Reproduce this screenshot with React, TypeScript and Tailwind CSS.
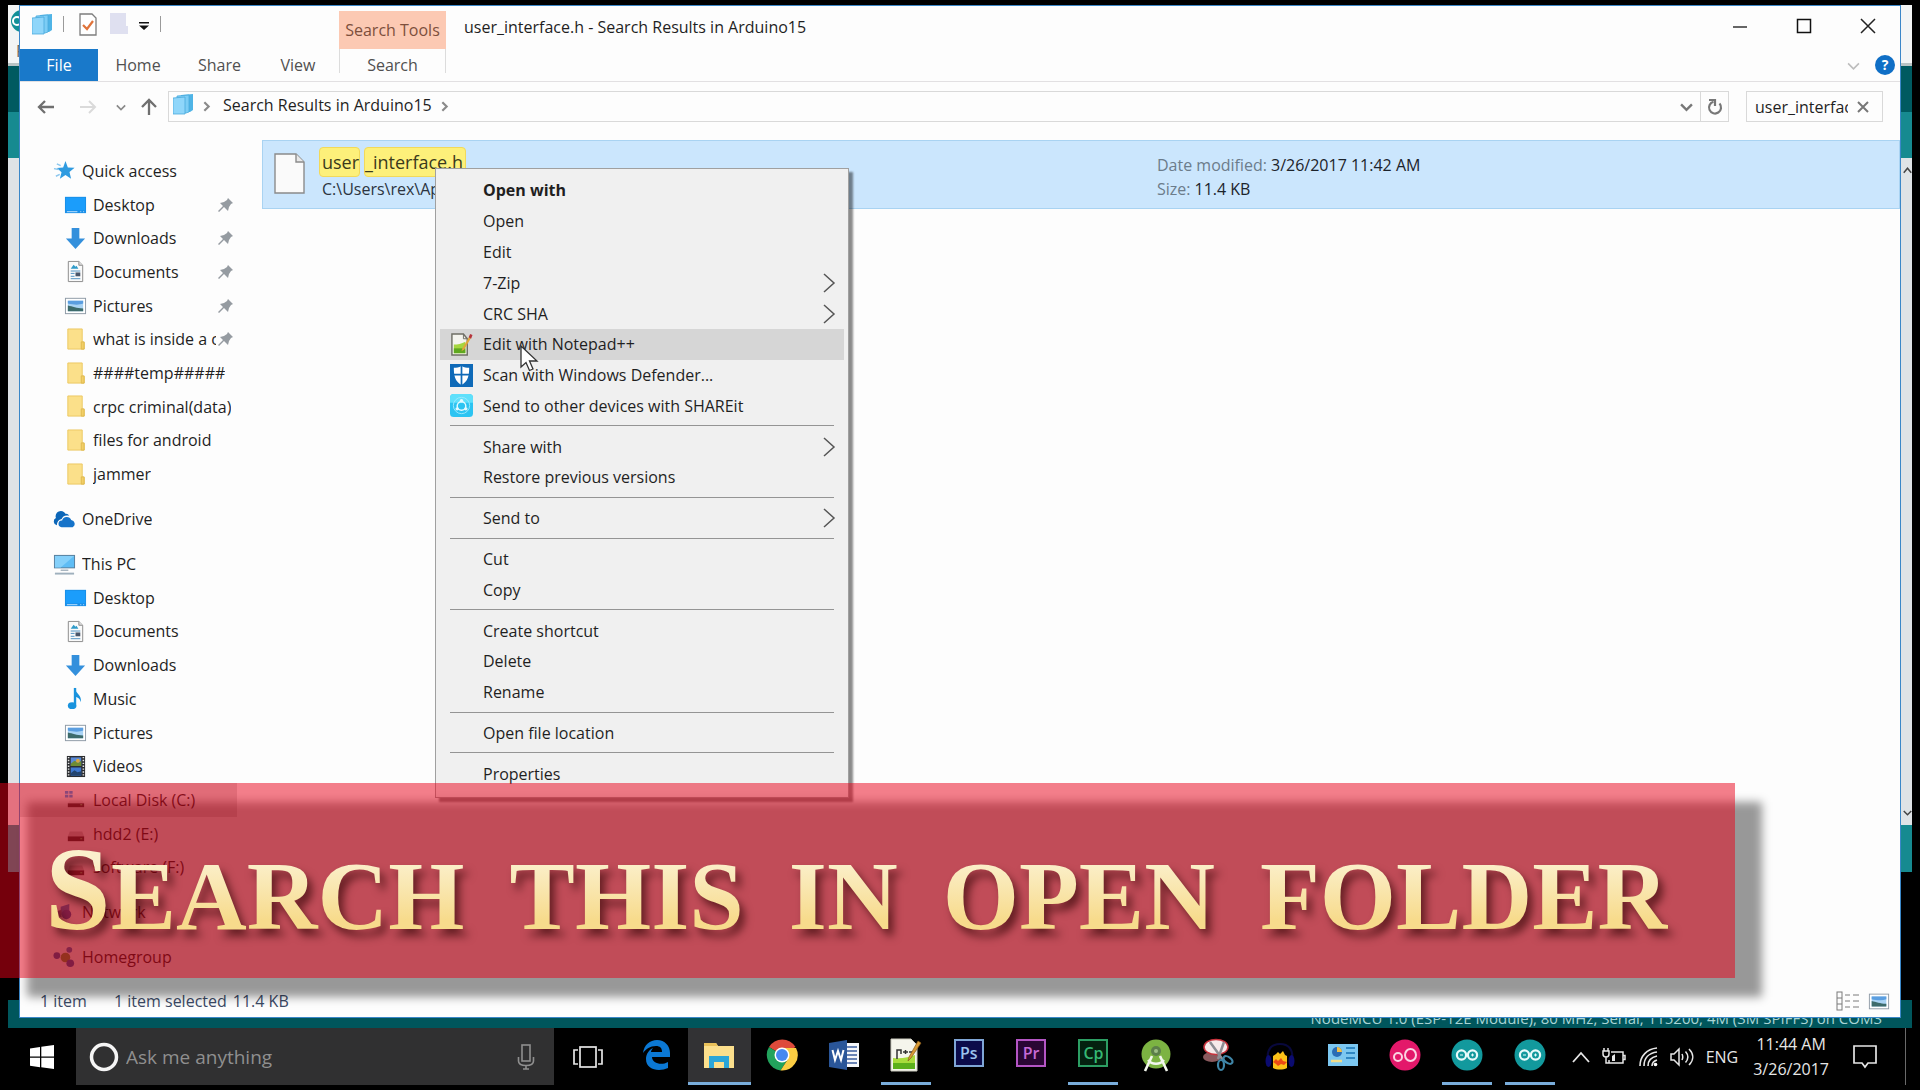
import React from 'react';

type IconName =
  | 'star' | 'desktop' | 'download' | 'document' | 'picture' | 'folder' | 'cloud' | 'pc'
  | 'music' | 'video' | 'systemDrive' | 'drive' | 'network' | 'homegroup';

interface TreeItem {
  label: string;
  icon: IconName;
  root?: boolean;
  pinned?: boolean;
  selected?: boolean;
}

interface MenuItem {
  label: string;
  bold?: boolean;
  submenu?: boolean;
  active?: boolean;
  icon?: React.ReactNode;
}

const ICONS: Record<IconName, React.ReactNode> = {
  star: (
    <>
      <path d="M13 2l2.500 6.800 7 .2-5.300 4.500 1.700 7-5.900-3.700-5.800 3.900 1.700-7L4 9.500l6.600-.6z" fill="#2f9be0" />
      <path d="M4 5l4 2M1 10l5 1M3 18l4-2" stroke="#8cc7ee" strokeWidth="1.500" />
    </>
  ),
  desktop: (
    <>
      <rect x="1" y="4" width="22" height="17" fill="#1a8fe8" />
      <rect x="2" y="5" width="20" height="13" fill="#1b9dfb" />
      <path d="M3 19.500h11M17 19.500h1M20 19.500h1" stroke="#bfe3ff" strokeWidth="1" />
    </>
  ),
  download: <path d="M8 1h8v11h6L12 23 2 12h6z" fill="#3490dc" />,
  document: (
    <>
      <path d="M4.500 1.500h11l4 4v17h-15z" fill="#fafafa" stroke="#8b8b8b" />
      <path d="M15.500 1.500v4h4" fill="#ddd" stroke="#8b8b8b" />
      <path d="M7 9l3-4 2 2 1-1 2 3z" fill="#2f9bc9" />
      <path d="M7 11.500h10M7 14h4M7 17h4M7 19.500h10" stroke="#4b8fc0" strokeWidth="1" />
      <rect x="12" y="13" width="5" height="4" fill="#49576b" />
    </>
  ),
  picture: (
    <>
      <rect x="1.500" y="4.500" width="21" height="16" fill="#fff" stroke="#8e9aa6" />
      <rect x="4" y="7" width="16" height="11" fill="#a9d3f4" />
      <path d="M4 7h16v3c-5 2-11 1-16 0z" fill="#5b9ee0" />
      <path d="M4 12c5 1 9 3 16 3v3H4z" fill="#3d6b6b" />
    </>
  ),
  folder: (
    <>
      <path d="M4 1h15v14h2v7H4z" fill="#fbe08a" />
      <path d="M4 1h15v14h2v7H4z" fill="none" stroke="#ecc860" strokeWidth="1" />
      <path d="M18 14.500h3V22h-3z" fill="#f3cf66" stroke="#dfb94f" strokeWidth="1" />
    </>
  ),
  cloud: (
    <>
      <path d="M4 18a4 4 0 0 1-1-7.500A5.500 5.500 0 0 1 13 6a4 4 0 0 1 4 2c-5-1-7 1-8 3.500-3 .5-5 3-5 6.500z" fill="#0c66b8" />
      <path d="M9 20a3.500 3.500 0 0 1 .5-7 5 5 0 0 1 9.500-.5A4 4 0 0 1 20.500 20z" fill="#1673c9" />
    </>
  ),
  pc: (
    <>
      <rect x="1" y="2" width="22" height="14" fill="#5b7f9b" />
      <rect x="2" y="3" width="20" height="12" fill="#5fbdf5" />
      <path d="M2 3h20L8 15H2z" fill="#85d0fa" />
      <path d="M8 18h8" stroke="#a7b4bf" strokeWidth="1.500" />
      <path d="M2 21.500h20" stroke="#9fb0bd" strokeWidth="2" />
    </>
  ),
  music: (
    <>
      <path d="M11.500 1v17" stroke="#1a93dd" strokeWidth="2.500" />
      <path d="M11 1c1 6 8 7 6.500 15-1-4-3-5-6.500-6z" fill="#1a93dd" />
      <ellipse cx="8.500" cy="19.500" rx="4.500" ry="3.500" fill="#1a93dd" />
    </>
  ),
  video: (
    <>
      <rect x="3" y="1" width="19" height="22" fill="#2b2d30" />
      <path d="M4.800 2v20M20.200 2v20" stroke="#e8e8e8" strokeWidth="1.600" strokeDasharray="1.500 1.500" />
      <rect x="7" y="2.500" width="11" height="9" fill="#5a8ad8" />
      <path d="M7 9l4-3 4 2 3-2v5.500H7z" fill="#6e8c34" />
      <circle cx="14.500" cy="6" r="2" fill="#d9a640" />
      <rect x="7" y="13" width="11" height="8.500" fill="#3f78cf" />
      <path d="M7 19l4-3 3 2 4-1v4.500H7z" fill="#23456f" />
    </>
  ),
  systemDrive: (
    <>
      <path d="M1 3h3.500v3H1zM5.500 3H9v3H5.500zM1 7h3.500v3H1zM5.500 7H9v3H5.500z" fill="#2f8fdb" />
      <path d="M6 13h13l2 3H4z" fill="#c9c9c9" />
      <rect x="4" y="16" width="17" height="4" fill="#303030" />
      <rect x="17" y="17" width="2" height="1" fill="#78d878" />
    </>
  ),
  drive: (
    <>
      <path d="M6 10h13l2 5H4z" fill="#c9c9c9" />
      <rect x="4" y="15" width="17" height="5" fill="#303030" />
      <rect x="17" y="17" width="2" height="1" fill="#78d878" />
    </>
  ),
  network: (
    <>
      <path d="M8 6l9-3v14l-9-3z" fill="#3f87d6" />
      <path d="M3 11l6-2v8l-6-2z" fill="#5e6b9b" />
      <circle cx="14" cy="14" r="5" fill="#3060b8" />
    </>
  ),
  homegroup: (
    <>
      <circle cx="4" cy="10" r="3.500" fill="#2a5fb4" />
      <circle cx="13" cy="12" r="5" fill="#6aa33c" />
      <circle cx="17" cy="4" r="3" fill="#3a76c6" />
      <circle cx="18" cy="18" r="4" fill="#2a5fb4" />
    </>
  ),
};

const quickAccess: TreeItem[] = [
  { label: 'Quick access', icon: 'star', root: true },
  { label: 'Desktop', icon: 'desktop', pinned: true },
  { label: 'Downloads', icon: 'download', pinned: true },
  { label: 'Documents', icon: 'document', pinned: true },
  { label: 'Pictures', icon: 'picture', pinned: true },
  { label: 'what is inside a c', icon: 'folder', pinned: true },
  { label: '####temp#####', icon: 'folder' },
  { label: 'crpc criminal(data)', icon: 'folder' },
  { label: 'files for android', icon: 'folder' },
  { label: 'jammer', icon: 'folder' },
];

const thisPc: TreeItem[] = [
  { label: 'This PC', icon: 'pc', root: true },
  { label: 'Desktop', icon: 'desktop' },
  { label: 'Documents', icon: 'document' },
  { label: 'Downloads', icon: 'download' },
  { label: 'Music', icon: 'music' },
  { label: 'Pictures', icon: 'picture' },
  { label: 'Videos', icon: 'video' },
  { label: 'Local Disk (C:)', icon: 'systemDrive', selected: true },
  { label: 'hdd2 (E:)', icon: 'drive' },
  { label: 'software (F:)', icon: 'drive' },
];

const treeGroups: TreeItem[][] = [
  quickAccess,
  [{ label: 'OneDrive', icon: 'cloud', root: true }],
  thisPc,
  [{ label: 'Network', icon: 'network', root: true }],
  [{ label: 'Homegroup', icon: 'homegroup', root: true }],
];

const NotepadIcon = () => (
  <svg width="23" height="23" viewBox="0 0 24 24">
    <path d="M2 1h12l4 5v17H2z" fill="#f4f4ee" stroke="#6f6f66" strokeWidth="1.500" />
    <path d="M14 1v5h4" fill="none" stroke="#6f6f66" />
    <path d="M4 12c4 0 8-1 12-3v12H4z" fill="#a5d63f" />
    <path d="M4 16h12v5H4z" fill="#5fa81f" />
    <path d="M20 4l-7 12-1 3 3-2 7-12z" fill="#e0a63c" />
    <path d="M19.500 4.500L21 1l2.500 1-1.500 4z" fill="#b5333c" />
  </svg>
);

const DefenderIcon = () => (
  <svg width="23" height="23" viewBox="0 0 24 24">
    <rect width="24" height="24" fill="#0f6ab8" />
    <path d="M12 2c3 1.500 5 2 8 2 0 8-1 14-8 18C5 18 4 12 4 4c3 0 5-.5 8-2z" fill="#fff" />
    <path d="M12 2v20M4 11h16" stroke="#0f6ab8" strokeWidth="1.800" />
  </svg>
);

const ShareItIcon = () => (
  <svg width="23" height="23" viewBox="0 0 24 24">
    <rect width="24" height="24" rx="4" fill="#2cc4f2" />
    <path d="M0 4a4 4 0 0 1 4-4h16a4 4 0 0 1 4 4v5H0z" fill="#5fe0fb" />
    <circle cx="12" cy="12" r="8.500" fill="none" stroke="#9be8fd" strokeWidth="1" />
    <circle cx="12" cy="12.500" r="4.500" fill="none" stroke="#e4faff" strokeWidth="1.500" />
    <circle cx="12" cy="7" r="1.800" fill="#e4faff" />
    <circle cx="7.500" cy="15.500" r="1.800" fill="#e4faff" />
    <circle cx="16.500" cy="15.500" r="1.800" fill="#e4faff" />
  </svg>
);

const menuGroups: MenuItem[][] = [
  [
    { label: 'Open with', bold: true },
    { label: 'Open' },
    { label: 'Edit' },
    { label: '7-Zip', submenu: true },
    { label: 'CRC SHA', submenu: true },
    { label: 'Edit with Notepad++', active: true, icon: <NotepadIcon /> },
    { label: 'Scan with Windows Defender...', icon: <DefenderIcon /> },
    { label: 'Send to other devices with SHAREit', icon: <ShareItIcon /> },
  ],
  [{ label: 'Share with', submenu: true }, { label: 'Restore previous versions' }],
  [{ label: 'Send to', submenu: true }],
  [{ label: 'Cut' }, { label: 'Copy' }],
  [{ label: 'Create shortcut' }, { label: 'Delete' }, { label: 'Rename' }],
  [{ label: 'Open file location' }],
  [{ label: 'Properties' }],
];

const SearchFolderIcon = () => (
  <svg width="21" height="21" viewBox="0 0 21 21">
    <path d="M8 1l12-1v16l-3 2H8z" fill="#4fb4e6" />
    <path d="M4 2l12-1v17l-3 1H4z" fill="#7ccdf5" stroke="#4aa9dc" strokeWidth=".8" />
    <path d="M0 4l12-1v17H0z" fill="#8fd6fa" stroke="#4aa9dc" strokeWidth=".8" />
  </svg>
);

const Chevron = ({ dir, size = 12, color = '#8a8a8a', stroke = 2 }: { dir: 'right' | 'down' | 'up'; size?: number; color?: string; stroke?: number }) => (
  <svg width={size} height={size} viewBox="0 0 12 12" fill="none" stroke={color} strokeWidth={stroke}>
    {dir === 'right' && <path d="M4 2l4 4-4 4" />}
    {dir === 'down' && <path d="M1 4l5 5 5-5" />}
    {dir === 'up' && <path d="M1 9l5-6 5 6" />}
  </svg>
);

const TreeRow = ({ item }: { item: TreeItem }) => (
  <button
    className={`flex min-h-0 flex-[3] items-center text-left ${item.root ? 'pl-[33px]' : 'pl-11'} ${
      item.selected ? 'bg-[#d9d9d9]' : ''
    }`}
  >
    <svg width="23" height="23" viewBox="0 0 24 24" className="shrink-0">{ICONS[item.icon]}</svg>
    <span className={`overflow-hidden whitespace-nowrap ${item.root ? 'ml-1.5' : 'ml-1.5'} ${item.pinned ? 'w-[123px]' : ''}`}>
      {item.label}
    </span>
    {item.pinned && (
      <svg width="16" height="16" viewBox="0 0 16 16" className="ml-0.5 shrink-0">
        <path d="M10 1l5 5-2 1-2 3-1 4-4-4-5 5-1-1 5-5-3-3 4-1 3-2z" fill="#959ba1" />
      </svg>
    )}
  </button>
);

const ContextMenu = () => (
  <div
    role="menu"
    className="absolute left-[415px] top-[162px] flex h-[630px] w-[414px] flex-col border border-[#a0a0a0] bg-[#f0f0f0] px-1 pb-2 pt-[6px] shadow-[4px_4px_2px_rgba(0,0,0,0.45)]"
  >
    {menuGroups.map((group, g) => (
      <React.Fragment key={g}>
        {g > 0 && <div className="mx-[10px] mb-[5px] mt-1 h-px shrink-0 bg-[#949494]" />}
        {group.map((item) => (
          <button
            key={item.label}
            role="menuitem"
            className={`flex min-h-0 flex-1 items-center pl-[10px] pr-2 ${item.active ? 'bg-[#d6d6d6]' : ''} ${
              item.bold ? 'font-bold' : ''
            }`}
          >
            <span className="w-[33px] shrink-0">{item.icon}</span>
            <span className="whitespace-nowrap">{item.label}</span>
            {item.submenu && (
              <svg width="14" height="20" viewBox="0 0 14 20" fill="none" stroke="#555" strokeWidth="1.500" className="ml-auto">
                <path d="M2 1l10 9-10 9" />
              </svg>
            )}
          </button>
        ))}
      </React.Fragment>
    ))}
  </div>
);

const Explorer = () => (
  <section className="absolute inset-x-[11px] bottom-[10px] top-0 flex flex-col border border-[#3b87c8] bg-[#fdfdfd]">
    {/* Title bar */}
    <div className="flex h-[43px] shrink-0 items-start">
      <div className="flex h-[36px] w-[319px] items-center pl-3">
        <SearchFolderIcon />
        <span className="ml-[10px] h-4 w-px bg-[#9a9a9a]" />
        <svg width="18" height="23" viewBox="0 0 18 23" className="ml-[15px]">
          <path d="M1 1h12l4 4v17H1z" fill="#fff" stroke="#7d7d7d" strokeWidth="1.300" />
          <path d="M4 12l4 4 6-8" fill="none" stroke="#e0733a" strokeWidth="2.200" />
        </svg>
        <svg width="18" height="22" viewBox="0 0 18 22" className="ml-[13px]">
          <path d="M0 0h16v13h2v8H0z" fill="#dfe0f0" />
        </svg>
        <svg width="12" height="10" viewBox="0 0 12 10" className="ml-[10px] mt-1">
          <path d="M1 1h10v1.500H1zM1 4.500h10L6 9z" fill="#111" />
        </svg>
        <span className="ml-[10px] h-4 w-px bg-[#9a9a9a]" />
      </div>
      <div className="mt-[5px] flex h-[38px] w-[107px] items-center justify-center bg-[#fcc9b3] text-[#7d4f3c]">Search Tools</div>
      <h1 className="mt-[9px] pl-[18px]">user_interface.h - Search Results in Arduino15</h1>
      <div className="ml-auto flex items-center gap-[48px] pr-6 pt-3">
        <button aria-label="Minimize">
          <svg width="16" height="16" viewBox="0 0 16 16"><path d="M1 9h14" stroke="#333" strokeWidth="1.500" /></svg>
        </button>
        <button aria-label="Maximize">
          <svg width="16" height="16" viewBox="0 0 16 16"><rect x="1.500" y="1.500" width="13" height="13" fill="none" stroke="#111" strokeWidth="1.500" /></svg>
        </button>
        <button aria-label="Close">
          <svg width="16" height="16" viewBox="0 0 16 16"><path d="M1 1l14 14M15 1L1 15" stroke="#222" strokeWidth="1.500" /></svg>
        </button>
      </div>
    </div>

    {/* Ribbon tabs */}
    <nav className="flex h-[33px] shrink-0 items-stretch border-b border-[#e2e0e2] text-[#505050]">
      <button className="w-[78px] bg-[#1979ca] text-white">File</button>
      <button className="w-20">Home</button>
      <button className="w-[83px]">Share</button>
      <button className="w-[78px] pr-1">View</button>
      <button className="mb-2 w-[107px] border-x border-[#dcdcdc] pt-1">Search</button>
      <div className="ml-auto flex items-center gap-[15px] pr-[5px]">
        <Chevron dir="down" size={13} color="#bdbdbd" stroke={1.5} />
        <button aria-label="Help" className="flex size-5 items-center justify-center rounded-full bg-[#0f6fc6] text-sm font-bold text-white">?</button>
      </div>
    </nav>

    {/* Address bar */}
    <div className="flex h-[42px] shrink-0 items-start pr-[17px] pt-[9px]">
      <div className="flex h-[31px] w-[148px] items-center pl-[17px]">
        <svg width="18" height="16" viewBox="0 0 18 16" fill="none" stroke="#6f6f6f" strokeWidth="2.300"><path d="M17 8H2M8 2L2 8l6 6" /></svg>
        <svg width="18" height="16" viewBox="0 0 18 16" fill="none" stroke="#dadada" strokeWidth="2" className="ml-6"><path d="M1 8h15M10 2l6 6-6 6" /></svg>
        <span className="ml-[19px]"><Chevron dir="down" size={10} /></span>
        <svg width="18" height="18" viewBox="0 0 18 18" fill="none" stroke="#6f6f6f" strokeWidth="2.300" className="ml-[14px]"><path d="M9 17V2M2 9l7-7 7 7" /></svg>
      </div>
      <div className="flex h-[31px] flex-1 items-center border border-[#d9d9d9] pl-1">
        <span className="pb-1"><SearchFolderIcon /></span>
        <span className="ml-[6px]"><Chevron dir="right" size={13} /></span>
        <span className="ml-[10px] whitespace-nowrap pb-[3px]">Search Results in Arduino15</span>
        <span className="ml-1.5"><Chevron dir="right" size={13} /></span>
        <span className="ml-auto mr-[7px]"><Chevron dir="down" size={13} color="#777" stroke={2.2} /></span>
        <button aria-label="Refresh" className="flex h-full w-7 items-center justify-center border-l border-[#d9d9d9]">
          <svg width="16" height="18" viewBox="0 0 16 18" fill="none" stroke="#777" strokeWidth="2.200">
            <path d="M12.500 5.500a6 6 0 1 1-6-1.800" />
            <path d="M2 2h6v6" />
          </svg>
        </button>
      </div>
      <div className="ml-[17px] flex h-[31px] w-[137px] items-center border border-[#d9d9d9] pl-2">
        <input aria-label="Search" defaultValue="user_interface.h" className="w-[93px] bg-transparent outline-none" />
        <button aria-label="Clear search" className="ml-[9px]">
          <svg width="12" height="12" viewBox="0 0 12 12"><path d="M1 1l10 10M11 1L1 11" stroke="#777" strokeWidth="2" /></svg>
        </button>
      </div>
    </div>

    <div className="flex min-h-0 flex-1">
      {/* Navigation pane */}
      <aside className="flex w-[217px] flex-col pb-[11px] pt-[30px]">
        {treeGroups.map((group, g) => (
          <React.Fragment key={g}>
            {g > 0 && <div className="flex-1" />}
            {group.map((item) => (
              <TreeRow key={item.label} item={item} />
            ))}
          </React.Fragment>
        ))}
      </aside>

      {/* Results */}
      <main className="flex-1 pl-[25px] pt-4">
        <div className="flex h-[69px] border border-[#a9d3f2] bg-[#cbe6fd] pl-[11px]">
          <svg width="31" height="41" viewBox="0 0 31 41" className="mt-3">
            <path d="M1 1h21l8 8v31H1z" fill="#fafafa" stroke="#8b8b8b" strokeWidth="1.400" />
            <path d="M22 1v8h8" fill="#e9e9e9" stroke="#8b8b8b" strokeWidth="1.400" />
          </svg>
          <div className="w-[852px] pl-[14px] pt-[6px]">
            <div className="flex gap-1 text-lg leading-7">
              <mark className="rounded-sm border border-[#f2d95a] bg-[#fdf07a] pl-0.5 text-[#3a3a1c]">user</mark>
              <mark className="rounded-sm border border-[#f2d95a] bg-[#fdf07a] pr-0.5 text-[#3a3a1c]">_interface.h</mark>
            </div>
            <p className="pl-[3px] leading-6 text-[#2c3440]">C:\Users\rex\Ap</p>
          </div>
          <dl className="pt-3 text-[#1c232b]">
            <div className="flex gap-1 leading-6">
              <dt className="text-[#6c7c8b]">Date modified:</dt>
              <dd>3/26/2017 11:42 AM</dd>
            </div>
            <div className="flex gap-1 leading-6">
              <dt className="text-[#6c7c8b]">Size:</dt>
              <dd>11.4 KB</dd>
            </div>
          </dl>
        </div>
      </main>
    </div>

    {/* Status bar */}
    <footer className="flex h-8 shrink-0 items-center pl-5 pr-[10px] text-[#3c4a66]">
      <span className="w-[74px]">1 item</span>
      <span>1 item selected</span>
      <span className="ml-[6px]">11.4 KB</span>
      <button aria-label="Details view" className="ml-auto">
        <svg width="24" height="20" viewBox="0 0 24 20" fill="none" stroke="#7a7a7a">
          <rect x="1" y="1" width="5" height="18" />
          <path d="M1 7h5M1 13h5M9 4h5M17 4h6M9 10h5M17 10h6M9 16h5M17 16h6" />
        </svg>
      </button>
      <button aria-label="Large icons view" className="ml-2">
        <svg width="22" height="22" viewBox="0 0 24 24">{ICONS.picture}</svg>
      </button>
    </footer>

    <ContextMenu />
    <svg width="19" height="27" viewBox="0 0 19 27" className="absolute left-[500px] top-[339px]">
      <path d="M1 1v21l5-4.500 3.500 8 3.500-1.500-3.500-8H17z" fill="#fff" stroke="#333" strokeWidth="1.300" />
    </svg>
  </section>
);

// Arduino IDE sitting behind the explorer window
const ArduinoWindow = () => (
  <div className="flex h-full flex-col">
    <div className="flex h-[58px] flex-col justify-between overflow-hidden bg-[#f3f5f5]">
      <svg width="22" height="26" viewBox="0 0 22 26" className="mt-1 shrink-0">
        <circle cx="14" cy="12" r="11" fill="#119097" />
        <circle cx="9" cy="12" r="4" fill="none" stroke="#fff" strokeWidth="2" />
      </svg>
      <span className="pl-2 leading-6 text-[#666]">File</span>
    </div>
    <div className="h-[3px] bg-[#b9c4c4]" />
    <div className="h-[46px] bg-[#005a60]" />
    <div className="h-[46px] bg-[#168a90]" />
    <div className="flex flex-1 flex-col items-end justify-between bg-[#dfe3e6] py-2">
      <Chevron dir="up" size={9} color="#444" />
      <Chevron dir="down" size={9} color="#444" />
    </div>
    <div className="h-[47px] bg-[#168a90]" />
    <div className="h-32 bg-black" />
    <div className="h-7 whitespace-nowrap bg-[#00565c] pr-[30px] text-right text-[15px] leading-[36px] text-[#a9d5d6]">
      NodeMCU 1.0 (ESP-12E Module), 80 MHz, Serial, 115200, 4M (3M SPIFFS) on COM3
    </div>
  </div>
);

const AdobeIcon = ({ text, className }: { text: string; className: string }) => (
  <span className={`mb-1 flex h-7 w-[30px] items-center justify-center border-2 text-base font-semibold leading-none ${className}`}>{text}</span>
);

const ArduinoIcon = () => (
  <svg width="32" height="32" viewBox="0 0 32 32">
    <circle cx="16" cy="16" r="15.500" fill="#12999d" />
    <circle cx="10.500" cy="16" r="4.600" fill="none" stroke="#e8fbfb" strokeWidth="2.200" />
    <circle cx="21.500" cy="16" r="4.600" fill="none" stroke="#e8fbfb" strokeWidth="2.200" />
    <path d="M9 16h3M20 16h3M21.500 14.500v3" stroke="#e8fbfb" strokeWidth="1" />
  </svg>
);

const taskbarApps: { name: string; icon: React.ReactNode; running?: boolean; focused?: boolean }[] = [
  {
    name: 'Edge',
    icon: (
      <svg width="30" height="32" viewBox="0 0 30 32">
        <path d="M1 14C2 6 8 1 15 1c8 0 13 6 13 13v4H10c0 6 9 9 16 5v6C17 33 4 31 4 20c0-5 3-9 7-11-1 1-2 3-2 4h11c0-4-2-6-6-6-6 0-10 3-13 7z" fill="#0b78d4" />
      </svg>
    ),
  },
  {
    name: 'File Explorer',
    running: true,
    focused: true,
    icon: (
      <svg width="32" height="28" viewBox="0 0 32 28">
        <path d="M1 2h12l2 3h16v22H1z" fill="#fbdf8c" />
        <path d="M1 2h12l2 3H1z" fill="#e9c15a" />
        <path d="M6 15h20v12h-5v-6H11v6H6z" fill="#2ba6d8" />
      </svg>
    ),
  },
  {
    name: 'Chrome',
    icon: (
      <svg width="32" height="32" viewBox="0 0 32 32">
        <path d="M16 16L3 8a15.500 15.500 0 0 1 26.500 0z" fill="#de4a3b" />
        <path d="M16 16L3 8a15.500 15.500 0 0 0 11.500 23.400L22 20z" fill="#22a35c" />
        <path d="M16 9h14a15.500 15.500 0 0 1-15.500 22.400L22 20z" fill="#fccd43" />
        <circle cx="16" cy="16" r="7.500" fill="#fff" />
        <circle cx="16" cy="16" r="6" fill="#4688f1" />
      </svg>
    ),
  },
  {
    name: 'Word',
    icon: (
      <svg width="32" height="32" viewBox="0 0 32 32">
        <rect x="17" y="4" width="14" height="24" fill="#f5f7fa" />
        <path d="M19 8h10M19 12h10M19 16h10M19 20h10M19 24h10" stroke="#3d5f9f" strokeWidth="1.500" />
        <path d="M1 4l18-3v30L1 28z" fill="#2a5699" />
        <path d="M4.500 11l2.500 10 3-9 3 9 2.500-10" fill="none" stroke="#fff" strokeWidth="2" />
      </svg>
    ),
  },
  {
    name: 'Notepad++',
    running: true,
    icon: (
      <svg width="32" height="34" viewBox="0 0 32 34">
        <path d="M1 1h20l6 6v26H1z" fill="#f5f5ec" stroke="#c9c9bd" />
        <path d="M3 20c9 1 16-1 22-3v14H3z" fill="#a8dc3c" />
        <path d="M3 25h22v6H3z" fill="#5cb01c" />
        <path d="M7 21v-9h4v4M13 14h5M15.500 12v4M19 14h4" fill="none" stroke="#333" strokeWidth="1.500" />
        <path d="M28 3l-9 16-1 4 3-3L31 5z" fill="#d99b35" stroke="#8a5c1c" strokeWidth=".7" />
      </svg>
    ),
  },
  { name: 'Photoshop', icon: <AdobeIcon text="Ps" className="border-[#7fa6d6] bg-[#0b0b4a] text-[#9cc3ee]" /> },
  { name: 'Premiere', icon: <AdobeIcon text="Pr" className="border-[#b455c4] bg-[#2a0634] text-[#c86ad6]" /> },
  { name: 'Captivate', running: true, icon: <AdobeIcon text="Cp" className="border-[#2c9e63] bg-[#04210f] text-[#35b873]" /> },
  {
    name: 'Android Studio',
    icon: (
      <svg width="30" height="33" viewBox="0 0 30 33">
        <circle cx="15" cy="15" r="14.500" fill="#7cb342" />
        <circle cx="15" cy="12" r="5" fill="#5c7f4a" />
        <path d="M11 17L4 32M19 17l7 15" stroke="#f3f7ee" strokeWidth="2.600" />
        <path d="M7 21c4 5 12 5 16 0" fill="none" stroke="#f3f7ee" strokeWidth="2.500" />
        <circle cx="15" cy="12" r="2" fill="#9fbf86" />
      </svg>
    ),
  },
  {
    name: 'Snipping Tool',
    icon: (
      <svg width="32" height="34" viewBox="0 0 32 34">
        <ellipse cx="10" cy="19" rx="9" ry="5" fill="#8a5a5e" />
        <ellipse cx="14" cy="9" rx="12" ry="7.500" fill="#f6eaea" stroke="#c8333d" strokeWidth="1.500" />
        <path d="M8 4l13 18M22 4l-6 17" stroke="#8d8d93" strokeWidth="2.500" />
        <ellipse cx="19" cy="27" rx="3" ry="5" fill="none" stroke="#3f86a8" strokeWidth="2.200" />
        <ellipse cx="26" cy="22" rx="5" ry="3" transform="rotate(35 26 22)" fill="none" stroke="#3f86a8" strokeWidth="2.200" />
      </svg>
    ),
  },
  {
    name: 'Audacity',
    icon: (
      <svg width="32" height="32" viewBox="0 0 32 32">
        <path d="M4 22C2 10 8 5 16 5s14 5 12 17" fill="none" stroke="#08083c" strokeWidth="2" />
        <ellipse cx="4.500" cy="22" rx="3" ry="6" fill="#0b0b70" />
        <ellipse cx="27.500" cy="22" rx="3" ry="6" fill="#0b0b70" />
        <path d="M9 29V17l3-2 2-2 2 2 3-3 2 4 2 1v12c-4 2-10 2-14 0z" fill="#fbc117" />
        <path d="M9 23l3-3 2 2 3-3 2 3 4 1-3 3-3-1-3 2-2-2z" fill="#ec4a14" />
      </svg>
    ),
  },
  {
    name: 'Control Panel',
    icon: (
      <svg width="30" height="22" viewBox="0 0 30 22">
        <rect width="30" height="22" fill="#7cc7f0" />
        <circle cx="9" cy="8" r="5" fill="#2b6cb5" />
        <path d="M9 8V3a5 5 0 0 1 5 5z" fill="#f0c04a" />
        <path d="M18 4h9M18 9h9M18 14h9" stroke="#2f88c4" strokeWidth="2" />
        <path d="M3 17h11" stroke="#f0dc8a" strokeWidth="2.500" />
      </svg>
    ),
  },
  {
    name: 'Camtasia',
    icon: (
      <svg width="32" height="32" viewBox="0 0 32 32">
        <circle cx="16" cy="16" r="15.500" fill="#e3186a" />
        <circle cx="9" cy="18" r="4" fill="none" stroke="#fbd3e2" strokeWidth="2" />
        <ellipse cx="21.500" cy="16" rx="5.500" ry="6" fill="none" stroke="#fbd3e2" strokeWidth="2" />
      </svg>
    ),
  },
  { name: 'Arduino', icon: <ArduinoIcon />, running: true },
  { name: 'Arduino sketch', icon: <ArduinoIcon />, running: true },
];

const Taskbar = () => (
  <div className="mb-[5px] flex h-[57px] shrink-0 items-center bg-black pr-[14px] text-[#e6e6e6]">
    <button aria-label="Start" className="flex w-[76px] justify-center pl-2">
      <svg width="24" height="24" viewBox="0 0 24 24" fill="#fff">
        <path d="M0 3.500L10 2v9.500H0zM11.300 1.800L24 0v11.500H11.300zM0 12.700h10v9.500L0 20.700zM11.300 12.700H24V24l-12.700-1.800z" />
      </svg>
    </button>
    <label className="flex h-full w-[478px] items-center bg-[#303031] pl-3">
      <svg width="32" height="32" viewBox="0 0 32 32" className="shrink-0">
        <circle cx="16" cy="16" r="12.500" fill="none" stroke="#f5f5f5" strokeWidth="3.500" />
      </svg>
      <input aria-label="Ask me anything" placeholder="Ask me anything" className="ml-[6px] min-w-0 flex-1 bg-transparent text-[19px] outline-none placeholder:text-[#8f8f8f]" />
      <svg width="18" height="26" viewBox="0 0 18 26" fill="none" stroke="#8f8f8f" strokeWidth="1.600" className="mr-[19px]">
        <rect x="5" y="1" width="8" height="16" />
        <path d="M1.500 13v4c0 3 3 4.500 7.500 4.500s7.500-1.500 7.500-4.500v-4M9 21.500V25M6 25h6" />
      </svg>
    </label>
    <button aria-label="Task view" className="flex w-[72px] justify-center pr-1">
      <svg width="30" height="22" viewBox="0 0 30 22" fill="none" stroke="#e6e6e6" strokeWidth="1.700">
        <rect x="7" y="1" width="16" height="20" />
        <path d="M5 4H1v14h4M25 4h4v14h-4" />
      </svg>
    </button>
    <div className="flex h-full w-[935px]">
      {taskbarApps.map((app) => (
        <button key={app.name} aria-label={app.name} className="flex min-w-0 flex-1 flex-col items-center">
          <span className={`flex w-full flex-1 items-center justify-center ${app.focused ? 'bg-[#323234]' : ''}`}>{app.icon}</span>
          <span className={`h-[3px] shrink-0 ${app.focused ? 'w-full' : 'w-[50px]'} ${app.running ? 'bg-[#79addb]' : ''}`} />
        </button>
      ))}
    </div>
    <div className="ml-auto flex h-full items-center">
      <svg width="18" height="12" viewBox="0 0 18 12" fill="none" stroke="#e6e6e6" strokeWidth="1.800"><path d="M1 11l8-9 8 9" /></svg>
      <svg width="24" height="20" viewBox="0 0 24 20" fill="none" stroke="#e6e6e6" strokeWidth="1.500" className="ml-3">
        <path d="M9 5h12v11H7v-3M21 8.500h2v4h-2M2 1v3M6 1v3M1 4h6v3c0 2-1 3-3 3s-3-1-3-3zM4 10v6h3" />
        <path d="M10 14V9l3-2v7z" fill="#e6e6e6" stroke="none" />
      </svg>
      <svg width="19" height="20" viewBox="0 0 19 20" fill="none" stroke="#e6e6e6" strokeWidth="1.600" className="ml-[13px]">
        <path d="M1 19C1 9 8 2 18 1M5 19C5 11 10 6 18 5M9 19c0-6 4-9 9-10M13 19c0-3 2-5 5-6" />
        <circle cx="16.500" cy="17.500" r="1.800" fill="#fff" stroke="none" />
      </svg>
      <svg width="24" height="20" viewBox="0 0 24 20" fill="none" stroke="#e6e6e6" strokeWidth="1.500" className="ml-3">
        <path d="M1 7h3l5-5v16l-5-5H1zM12 7c1 2 1 4 0 6M15.500 4.500c3 3.500 3 7.500 0 11M19 2c5 5 5 11 0 16" />
      </svg>
      <span className="ml-3">ENG</span>
      <div className="ml-[15px] text-center leading-[25px]">
        <p>11:44 AM</p>
        <p>3/26/2017</p>
      </div>
      <svg width="24" height="24" viewBox="0 0 24 24" fill="none" stroke="#e6e6e6" strokeWidth="1.700" className="ml-6">
        <path d="M1 1h22v17h-8l-3 4-3-4H1z" />
      </svg>
      <span className="ml-[28px] h-full w-px bg-[#6a6a6a]" />
    </div>
  </div>
);

const words = ['THIS', 'IN', 'OPEN', 'FOLDER'];

const Caption = () => (
  <>
    <div className="absolute left-[27px] right-[158px] top-[802px] h-[195px] bg-black/40 blur-[5px]" />
    <div className="absolute left-0 right-[185px] top-[783px] flex h-[195px] items-center bg-[#ea0018]/50 pl-[45px] pt-[18px]">
      <h2 className="flex items-baseline gap-[45px] whitespace-nowrap bg-linear-to-b from-[#fbf0cc] from-25% to-[#f7db8c] to-75% bg-clip-text font-['Liberation_Serif',serif] text-[98px] font-bold leading-none text-transparent drop-shadow-[5px_7px_4px_rgba(40,0,0,0.6)]">
        <span><span className="text-[118px] leading-none">S</span>EARCH</span>
        {words.map((word) => (
          <span key={word}>{word}</span>
        ))}
      </h2>
    </div>
  </>
);

const App: React.FC = () => (
  <div className="relative flex h-screen flex-col overflow-hidden bg-black font-['Open_Sans',sans-serif] text-base leading-6 text-[#1f1f1f]">
    <div className="relative mx-2 mt-[5px] min-h-0 flex-1">
      <ArduinoWindow />
      <Explorer />
    </div>
    <Taskbar />
    <Caption />
  </div>
);

export default App;
